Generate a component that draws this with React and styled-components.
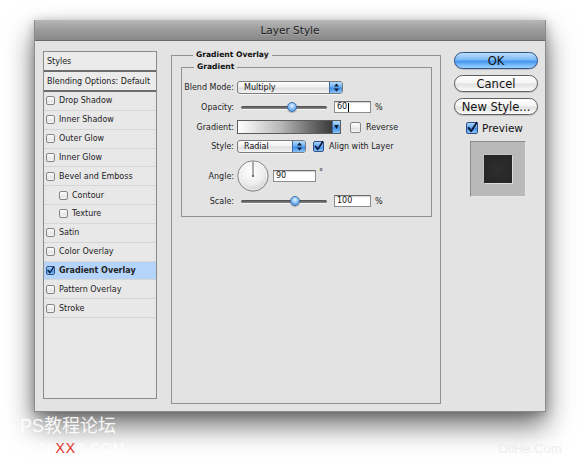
import React from 'react';
import styled, { createGlobalStyle } from 'styled-components';

const Global = createGlobalStyle`
  html, body { margin: 0; padding: 0; background: #fff; }
  body { font-family: "DejaVu Sans", "Noto Sans", sans-serif; color: #1a1a1a; }
  * { box-sizing: border-box; }
`;

const Page = styled.div`
  position: relative;
  width: 580px;
  height: 458px;
  overflow: hidden;
  background: #fff;
  padding: 20px 0 0 34px;
`;

const Dialog = styled.div`
  width: 512px;
  height: 392px;
  background: #e3e3e3;
  border: 1px solid #8c8c8c;
  border-top: none;
  box-shadow: 0 14px 26px rgba(0, 0, 0, 0.55), 0 2px 10px rgba(0, 0, 0, 0.25);
  display: flex;
  flex-direction: column;
`;

const TitleBar = styled.div`
  height: 21px;
  flex: none;
  background: linear-gradient(#b8b8b8, #9e9e9e 45%, #888888);
  border-bottom: 1px solid #6a6a6a;
  display: flex;
  align-items: center;
  justify-content: center;
  font-size: 10.5px;
  color: #1c1c1c;
  text-shadow: 0 1px 0 rgba(255, 255, 255, 0.25);
`;

const Body = styled.div`
  flex: 1;
  display: flex;
  align-items: flex-start;
  padding: 10px 0 0 8px;
`;

const StylesList = styled.div`
  width: 114px;
  height: 348px;
  flex: none;
  border: 1px solid #8a8a8a;
  background: #e8e8e8;
  display: flex;
  flex-direction: column;
`;

const HeaderRow = styled.div`
  height: ${p => p.$h}px;
  flex: none;
  border-bottom: 2px solid #6c6c6c;
  display: flex;
  align-items: center;
  padding-left: 3px;
  font-size: 8px;
  background: #ebebeb;
`;

const ListRow = styled.div`
  height: 18.85px;
  flex: none;
  border-bottom: 1px solid #d6d6d6;
  display: flex;
  align-items: center;
  gap: 4px;
  padding-left: ${p => (p.$indent ? 15 : 2)}px;
  font-size: 8px;
  font-weight: ${p => (p.$selected ? 'bold' : 'normal')};
  background: ${p => (p.$selected ? '#b5d4fa' : 'transparent')};
  color: #222;
`;

const Box = styled.span`
  width: ${p => p.$size}px;
  height: ${p => p.$size}px;
  flex: none;
  border: 1px solid ${p => (p.$checked ? '#2f4f86' : '#858585')};
  border-radius: 2px;
  background: ${p =>
    p.$checked
      ? 'linear-gradient(#a9d3fb, #5fa5ef 50%, #3d8ae6 51%, #8cc6fb)'
      : 'linear-gradient(#fdfdfd, #ececec 50%, #e0e0e0 51%, #f6f6f6)'};
  display: inline-flex;
  align-items: center;
  justify-content: center;
  overflow: visible;
`;

const CheckSvg = styled.svg`
  width: 100%;
  height: 100%;
  overflow: visible;
`;

const Checkbox = ({ checked, size = 9 }) => (
  <Box $size={size} $checked={checked}>
    {checked && (
      <CheckSvg viewBox="0 0 10 10">
        <path d="M1.6 4.8 L4.2 8.2 L9.6 -0.2" fill="none" stroke="#0d1a3a" strokeWidth="1.9" strokeLinecap="round" strokeLinejoin="round" />
      </CheckSvg>
    )}
  </Box>
);

const Fieldset = styled.fieldset`
  margin: ${p => p.$margin};
  padding: ${p => p.$pad};
  border: 1px solid #919191;
  width: ${p => p.$w}px;
  height: ${p => (p.$h ? `${p.$h}px` : 'auto')};
  min-width: 0;
  flex: none;
`;

const Legend = styled.legend`
  margin-left: 12px;
  padding: 0 3px;
  font-weight: bold;
  font-size: 7.6px;
  line-height: 10px;
  color: #111;
`;

const Rows = styled.div`
  display: flex;
  flex-direction: column;
`;

const Row = styled.div`
  display: flex;
  align-items: center;
  height: ${p => p.$h}px;
  margin-top: ${p => p.$mt}px;
`;

const Label = styled.span`
  width: 52px;
  flex: none;
  text-align: right;
  font-size: 8px;
  color: #1e1e1e;
  margin-right: 3px;
`;

const Select = styled.div`
  width: ${p => p.$w}px;
  height: 13px;
  flex: none;
  display: flex;
  border: 1px solid #7c7c7c;
  border-radius: 3px;
  overflow: hidden;
  background: linear-gradient(#ffffff, #f1f1f1 45%, #dedede 55%, #f4f4f4);
  box-shadow: 0 1px 0 rgba(255, 255, 255, 0.6);
`;

const SelectText = styled.span`
  flex: 1;
  padding-left: 6px;
  font-size: 8px;
  line-height: 11px;
  color: #111;
`;

const SelectCap = styled.span`
  width: ${p => p.$w}px;
  flex: none;
  border-left: 1px solid #3c6aa8;
  background: linear-gradient(#b4dafb, #6eb1f3 45%, #3f8be5 55%, #88c4fa);
  display: flex;
  align-items: center;
  justify-content: center;
`;

const CapSvg = styled.svg`
  width: 7px;
  height: 9px;
`;

const UpDown = () => (
  <CapSvg viewBox="0 0 7 9">
    <path d="M3.5 0.5 L6 3.5 L1 3.5 Z M3.5 8.5 L6 5.5 L1 5.5 Z" fill="#0e1a33" />
  </CapSvg>
);

const Slider = styled.div`
  position: relative;
  width: 86px;
  height: 12px;
  flex: none;
  margin-left: 4px;
  margin-right: 7px;
  display: flex;
  align-items: center;
`;

const Track = styled.div`
  width: 100%;
  height: 3px;
  border-radius: 2px;
  background: linear-gradient(#4a4a4a, #8a8a8a);
  box-shadow: 0 1px 0 #f4f4f4;
`;

const Thumb = styled.div`
  position: absolute;
  top: 1px;
  left: ${p => p.$pos}%;
  margin-left: -5px;
  width: 10px;
  height: 10px;
  border-radius: 50%;
  border: 1px solid #3e6ea6;
  background: radial-gradient(circle at 50% 35%, #e6f3ff, #8cc2f5 45%, #3f87dc);
  box-shadow: 0 1px 1px rgba(0, 0, 0, 0.25);
`;

const Input = styled.div`
  width: ${p => p.$w}px;
  height: 12px;
  flex: none;
  background: #fff;
  border: 1px solid #8c8c8c;
  border-top-color: #6e6e6e;
  box-shadow: inset 0 1px 1px rgba(0, 0, 0, 0.18);
  font-size: 8px;
  line-height: 10px;
  padding-left: 2px;
  color: #111;
  display: flex;
  align-items: center;
`;

const Caret = styled.span`
  width: 1px;
  height: 9px;
  background: #000;
  margin-left: 1px;
`;

const Unit = styled.span`
  font-size: 8px;
  margin-left: ${p => p.$ml}px;
  transform: translateY(${p => (p.$raise ? -4 : 0)}px);
  color: #222;
`;

const GradientPicker = styled.div`
  display: flex;
  height: 14px;
  flex: none;
  border: 1px solid #5c5c5c;
`;

const GradientSwatch = styled.div`
  width: 94px;
  height: 100%;
  background: linear-gradient(to right, #ffffff, #b9b9b9 45%, #5a5a5a 85%, #3a3a3a);
`;

const GradientCap = styled.div`
  width: 8px;
  height: 100%;
  border-left: 1px solid #3c6aa8;
  background: linear-gradient(#b4dafb, #6eb1f3 45%, #3f8be5 55%, #88c4fa);
  display: flex;
  align-items: center;
  justify-content: center;
`;

const DownSvg = styled.svg`
  width: 5px;
  height: 4px;
`;

const Option = styled.div`
  display: flex;
  align-items: center;
  gap: 5px;
  margin-left: ${p => p.$ml}px;
  font-size: 8px;
  color: #1a1a1a;
`;

const DialSvg = styled.svg`
  width: 32px;
  height: 32px;
  flex: none;
  margin-right: 4px;
`;

const Dial = () => (
  <DialSvg viewBox="0 0 32 32">
    <defs>
      <radialGradient id="dialg" cx="0.45" cy="0.35" r="0.7">
        <stop offset="0" stopColor="#ffffff" />
        <stop offset="0.6" stopColor="#ededed" />
        <stop offset="1" stopColor="#c9c9c9" />
      </radialGradient>
    </defs>
    <circle cx="16" cy="16" r="15.2" fill="url(#dialg)" stroke="#7a7a7a" strokeWidth="0.9" />
    <circle cx="16" cy="16" r="13.8" fill="none" stroke="#ffffff" strokeWidth="0.6" opacity="0.8" />
    <line x1="16" y1="16" x2="16" y2="1.5" stroke="#4a4a4a" strokeWidth="0.9" />
    <circle cx="16" cy="16" r="1" fill="#4a4a4a" />
  </DialSvg>
);

const Side = styled.div`
  width: 84px;
  flex: none;
  margin-left: 13px;
  padding-top: 1px;
  display: flex;
  flex-direction: column;
  align-items: center;
`;

const Button = styled.div`
  width: 84px;
  height: 17px;
  margin-bottom: 6px;
  border-radius: 9px;
  border: 1px solid ${p => (p.$primary ? '#2d4f86' : '#5e5e5e')};
  background: ${p =>
    p.$primary
      ? 'linear-gradient(#bcdffc, #7db9f5 45%, #4594ee 55%, #9fd5ff)'
      : 'linear-gradient(#ffffff, #f4f4f4 45%, #e1e1e1 55%, #fbfbfb)'};
  display: flex;
  align-items: center;
  justify-content: center;
  font-size: 11.5px;
  color: #111;
  box-shadow: 0 1px 1px rgba(0, 0, 0, 0.15);
`;

const PreviewRow = styled.div`
  display: flex;
  align-items: center;
  gap: 4px;
  height: 13px;
  margin-left: -3px;
  font-size: 10.5px;
  color: #111;
`;

const PreviewSwatch = styled.div`
  width: 56px;
  height: 56px;
  margin-top: 7px;
  margin-left: 3px;
  background: #b9b9b9;
  border: 1px solid #8c8c8c;
  border-right-color: #e8e8e8;
  border-bottom-color: #e8e8e8;
  display: flex;
  align-items: center;
  justify-content: center;
`;

const PreviewSquare = styled.div`
  width: 28px;
  height: 28px;
  background: radial-gradient(circle, #2e2e2e, #242424);
  box-shadow: 1px 1px 0 #dcdcdc, -1px -1px 0 #c4c4c4;
`;

const Watermark = styled.div`
  position: absolute;
  left: ${p => p.$x}px;
  top: ${p => p.$y}px;
  font-family: "Liberation Sans", "Noto Sans CJK SC", sans-serif;
  font-size: ${p => p.$size}px;
  line-height: 1;
  color: ${p => p.$color};
  white-space: nowrap;
  letter-spacing: ${p => p.$ls || 0}px;
`;

const Red = styled.span`
  color: #e0302c;
`;

const listItems = [
  { label: 'Drop Shadow' },
  { label: 'Inner Shadow' },
  { label: 'Outer Glow' },
  { label: 'Inner Glow' },
  { label: 'Bevel and Emboss' },
  { label: 'Contour', indent: true },
  { label: 'Texture', indent: true },
  { label: 'Satin' },
  { label: 'Color Overlay' },
  { label: 'Gradient Overlay', checked: true, selected: true },
  { label: 'Pattern Overlay' },
  { label: 'Stroke' },
];

export default function App() {
  return (
    <>
      <Global />
      <Page>
        <Dialog>
          <TitleBar>Layer Style</TitleBar>
          <Body>
            <StylesList>
              <HeaderRow $h={20}>Styles</HeaderRow>
              <HeaderRow $h={20}>Blending Options: Default</HeaderRow>
              {listItems.map(it => (
                <ListRow key={it.label} $indent={it.indent} $selected={it.selected}>
                  <Checkbox checked={it.checked} size={9} />
                  {it.label}
                </ListRow>
              ))}
            </StylesList>

            <Fieldset $w={270} $h={354} $margin="-1px 0 0 14px" $pad="2px 8px 0 9px">
              <Legend>Gradient Overlay</Legend>
              <Fieldset $w={251} $margin="0" $pad="8px 0 8px 0">
                <Legend>Gradient</Legend>
                <Rows>
                  <Row $h={14} $mt={0}>
                    <Label>Blend Mode:</Label>
                    <Select $w={106}>
                      <SelectText>Multiply</SelectText>
                      <SelectCap $w={13}><UpDown /></SelectCap>
                    </Select>
                  </Row>
                  <Row $h={14} $mt={6}>
                    <Label>Opacity:</Label>
                    <Slider>
                      <Track />
                      <Thumb $pos={59} />
                    </Slider>
                    <Input $w={37}>60<Caret /></Input>
                    <Unit $ml={4}>%</Unit>
                  </Row>
                  <Row $h={14} $mt={6}>
                    <Label>Gradient:</Label>
                    <GradientPicker>
                      <GradientSwatch />
                      <GradientCap>
                        <DownSvg viewBox="0 0 5 4"><path d="M0 0 L5 0 L2.5 4 Z" fill="#0e1a33" /></DownSvg>
                      </GradientCap>
                    </GradientPicker>
                    <Option $ml={9}>
                      <Checkbox size={11} />
                      Reverse
                    </Option>
                  </Row>
                  <Row $h={14} $mt={5.5}>
                    <Label>Style:</Label>
                    <Select $w={69}>
                      <SelectText>Radial</SelectText>
                      <SelectCap $w={13}><UpDown /></SelectCap>
                    </Select>
                    <Option $ml={7}>
                      <Checkbox size={11} checked />
                      Align with Layer
                    </Option>
                  </Row>
                  <Row $h={32} $mt={6.5}>
                    <Label>Angle:</Label>
                    <Dial />
                    <Input $w={43}>90</Input>
                    <Unit $ml={3} $raise>°</Unit>
                  </Row>
                  <Row $h={14} $mt={2}>
                    <Label>Scale:</Label>
                    <Slider>
                      <Track />
                      <Thumb $pos={63} />
                    </Slider>
                    <Input $w={37}>100</Input>
                    <Unit $ml={4}>%</Unit>
                  </Row>
                </Rows>
              </Fieldset>
            </Fieldset>

            <Side>
              <Button $primary>OK</Button>
              <Button>Cancel</Button>
              <Button>New Style...</Button>
              <PreviewRow>
                <Checkbox size={12} checked />
                Preview
              </PreviewRow>
              <PreviewSwatch>
                <PreviewSquare />
              </PreviewSwatch>
            </Side>
          </Body>
        </Dialog>

        <Watermark $x={20} $y={417} $size={18} $color="rgba(255,255,255,0.92)">PS教程论坛</Watermark>
        <Watermark $x={2} $y={441} $size={14} $color="rgba(255,255,255,0.9)" $ls={1}>
          BBS.16<Red>XX</Red>8.COM
        </Watermark>
        <Watermark $x={498} $y={442} $size={13} $color="rgba(235,235,235,0.9)">OliHe.Com</Watermark>
      </Page>
    </>
  );
}
